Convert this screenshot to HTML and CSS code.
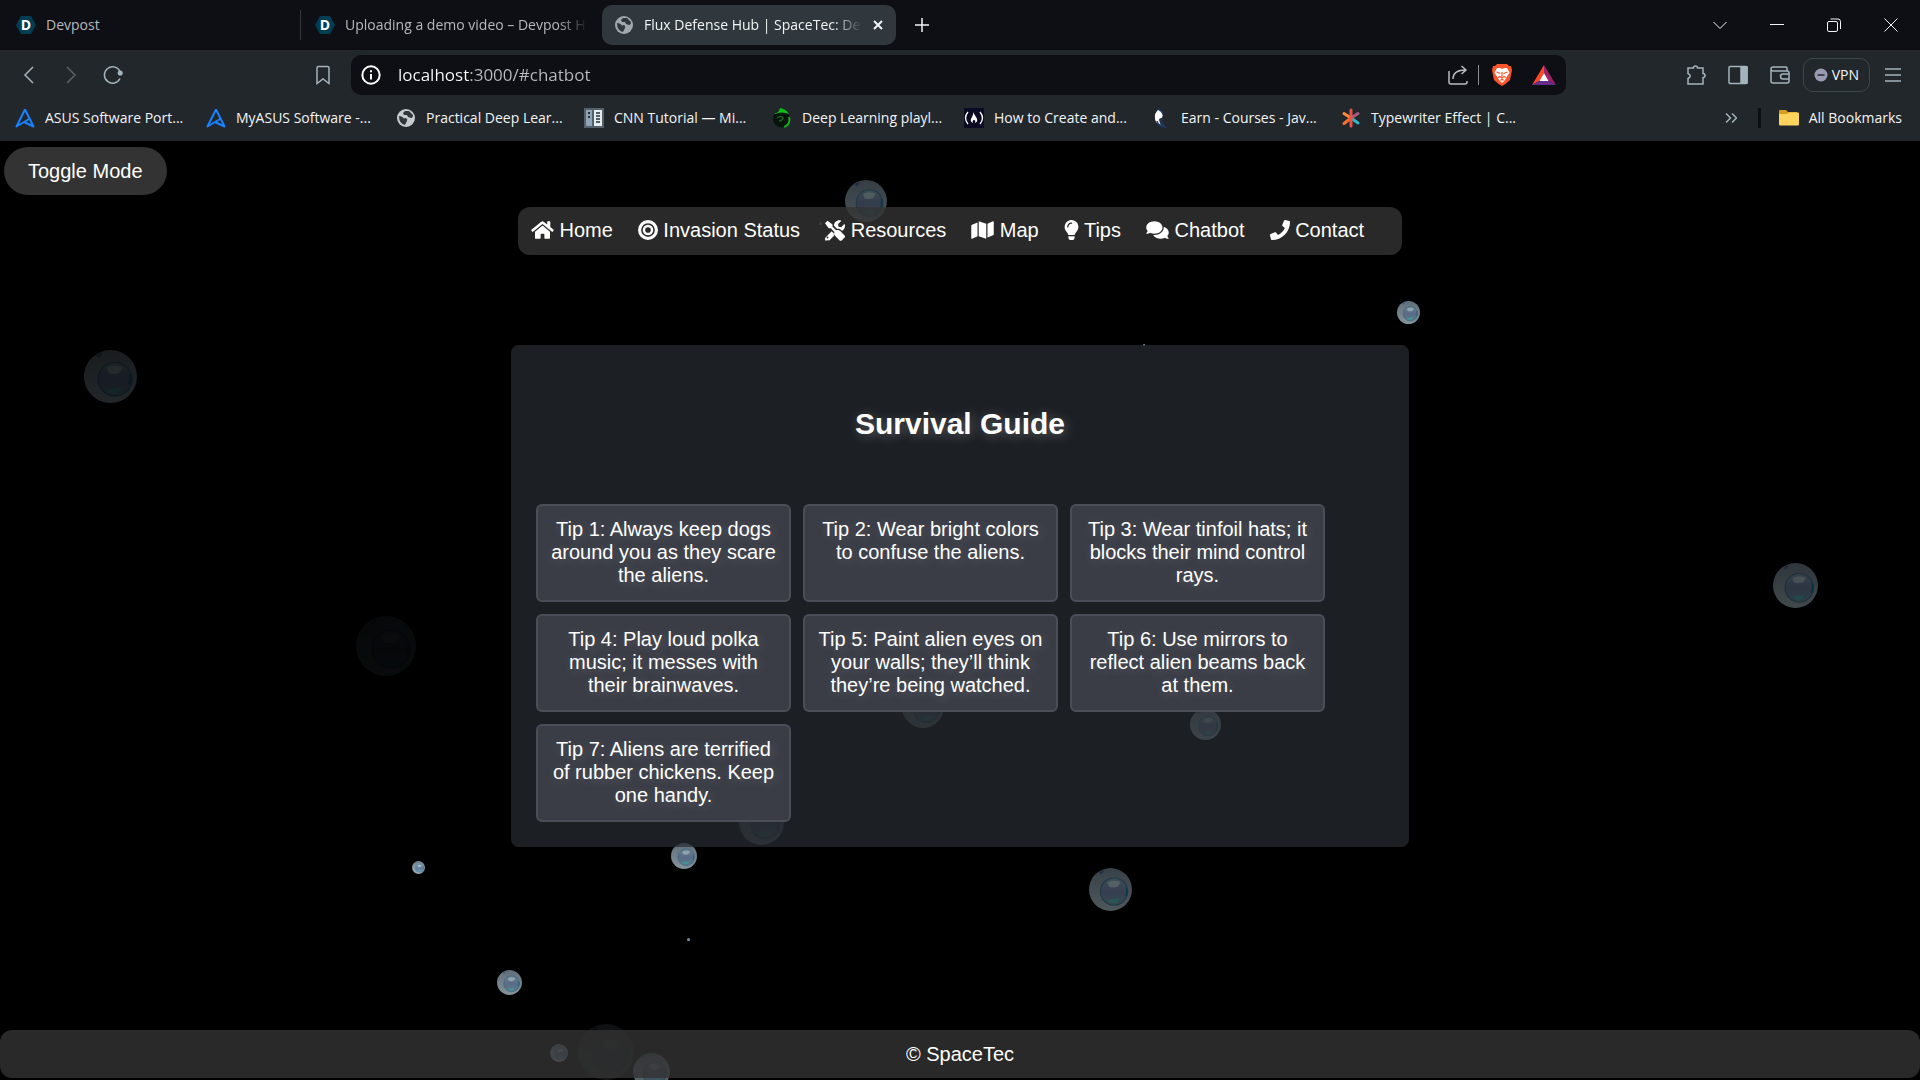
FILE: index.html
```
<!DOCTYPE html>
<html lang="en">
<head>
    <meta charset="UTF-8">
    <meta name="viewport" content="width=device-width, initial-scale=1.0">
    <title>Flux Defense Hub | SpaceTec</title>
    <link rel="stylesheet" href="styles.css">
</head>
<body>

<!-- shared symbols -->
<svg class="defs" aria-hidden="true">
    <defs>
        <linearGradient id="shell" x1="0" y1="0" x2="0" y2="1">
            <stop offset="0" stop-color="#70828f"/>
            <stop offset="1" stop-color="#9caeb6"/>
        </linearGradient>
        <linearGradient id="core" x1="0" y1="0" x2="0" y2="1">
            <stop offset="0" stop-color="#7d9bab"/>
            <stop offset=".5" stop-color="#6c7c9f"/>
            <stop offset="1" stop-color="#6d93a0"/>
        </linearGradient>
        <symbol id="bubble" viewBox="0 0 60 60">
            <circle cx="30" cy="30" r="30" fill="url(#shell)"/>
            <path d="M14 6q5-3 7-4 0 5-5 7z" fill="#4b6288"/>
            <circle cx="35" cy="33" r="19" fill="url(#core)" stroke="#3f7690" stroke-width="1.6"/>
            <path d="M26 20q9-5 18 0l-4 6q-6 2-12 0z" fill="#b5cdd2" opacity=".8"/>
            <path d="M26 45l16-3-3 6q-7 3-13-3z" fill="#49b3b5" opacity=".9"/>
            <path d="M52 27q2 7-1 12" fill="none" stroke="#0e7796" stroke-width="2"/>
        </symbol>
        <symbol id="devpost" viewBox="0 0 20 20">
            <path d="M5 1h10l5 9-5 9H5L0 10z" fill="#003e54"/>
            <text x="10" y="15" class="devpost-letter">D</text>
        </symbol>
        <symbol id="globe" viewBox="0 0 18 18">
            <circle cx="9" cy="9" r="9" fill="currentColor"/>
            <path d="M2 7q3 0 4 1.500t3 .5q2 1 1 3t-2 4q-6-1-6-9zM8 2l4 0 4 4q0 3-2 3l-3-1-1-2H7l-1-2z" class="globe-land"/>
        </symbol>
        <symbol id="asus" viewBox="0 0 20 20">
            <path d="M10 1.500L1.500 18.500 15 10.500M10 1.500l8.500 17-9.500-4.500" fill="none" stroke="#1a82ff" stroke-width="2" stroke-linejoin="round"/>
        </symbol>
    </defs>
</svg>

<header class="browser">
    <div class="tabs">
        <button class="tab"><svg class="favicon"><use href="#devpost"/></svg><span>Devpost</span></button>
        <button class="tab divided"><svg class="favicon"><use href="#devpost"/></svg><span class="fade">Uploading a demo video – Devpost H</span></button>
        <button class="tab active"><svg class="favicon small"><use href="#globe"/></svg><span class="fade">Flux Defense Hub | SpaceTec: De</span>
            <svg class="x" viewBox="0 0 12 12"><path d="M2 2l8 8M10 2l-8 8"/></svg>
        </button>
        <button class="new-tab" aria-label="New tab"><svg viewBox="0 0 14 14"><path d="M7 0v14M0 7h14"/></svg></button>
        <div class="window-btns">
            <button aria-label="Search tabs"><svg viewBox="0 0 14 14"><path d="M.5 4L7 10.500 13.500 4"/></svg></button>
            <button aria-label="Minimize"><svg viewBox="0 0 14 14"><path d="M0 6.500h14"/></svg></button>
            <button aria-label="Restore"><svg viewBox="0 0 14 14"><rect x=".5" y="3.500" width="10" height="10" rx="1.500"/><path d="M3.500 1h7.500q2.500 0 2.500 2.500V11"/></svg></button>
            <button aria-label="Close"><svg viewBox="0 0 14 14"><path d="M.5.5l13 13M13.500.5l-13 13"/></svg></button>
        </div>
    </div>

    <div class="toolbar">
        <div class="history">
            <button aria-label="Back"><svg viewBox="0 0 20 20"><path d="M14 2L6 10l8 8"/></svg></button>
            <button aria-label="Forward" class="off"><svg viewBox="0 0 20 20"><path d="M6 2l8 8-8 8"/></svg></button>
            <button aria-label="Reload"><svg viewBox="0 0 20 20"><path d="M17 13.500A8.200 8.200 0 1 1 16.800 6"/><circle cx="17.200" cy="8" r="1.800" fill="currentColor"/></svg></button>
        </div>
        <button class="save" aria-label="Bookmark this page"><svg viewBox="0 0 20 20"><path d="M4 18.500V3q0-1.500 1.500-1.500h9Q16 1.500 16 3v15.500l-6-4.500z"/></svg></button>
        <div class="address">
            <svg class="info" viewBox="0 0 18 18"><circle cx="9" cy="9" r="7.800"/><path d="M9 8v5M9 4.800v1.800"/></svg>
            <input type="text" class="url" aria-label="Address" value="localhost:3000/#chatbot">
            <button aria-label="Share"><svg viewBox="0 0 20 20"><path d="M1 6v11q0 2 2 2h14q2 0 2-2v-1M5 14q0-9 13-9M13.500 1L18 5l-4.500 4"/></svg></button>
            <i class="bar"></i>
            <button aria-label="Shields"><svg class="lion" viewBox="0 0 20 22"><path d="M5 0h10l2 2 2 0 1 4-2 10q-4 4-8 6-4-2-8-6L0 6l1-4h2z" fill="#fb542b"/><path d="M5 4l3 0 2 1 2-1 3 0 2.500 4.500L16 11l-2 3-1 2-3 3-3-3-1-2-2-3-1.500-2.500z" fill="#fff"/><path d="M4.500 8l4 1.500M15.500 8l-4 1.500M10 8v4.500M6 13.500l2-1 2 1.500 2-1.500 2 1M8.500 16.500L10 15l1.500 1.500" fill="none" stroke="#fb542b" stroke-width="1.200"/></svg></button>
            <button aria-label="Rewards"><svg class="bat" viewBox="0 0 24 20"><path d="M12 0L0 20l8-4.500 4-7.500z" fill="#ff4724"/><path d="M12 0l12 20-8-4.500L12 8z" fill="#9e1f63"/><path d="M0 20h24l-8-4.500H8z" fill="#662d91"/><path d="M12 8l4.500 8h-9z" fill="#fff"/></svg></button>
        </div>
        <div class="tools">
            <button aria-label="Extensions"><svg viewBox="0 0 20 20"><path d="M2 3h5.500a2 2 0 0 1 4 0H17v5.500a2 2 0 0 1 0 4V19H2v-5.500q4.500-2.500 0-5z"/></svg></button>
            <button aria-label="Sidebar"><svg viewBox="0 0 20 20"><rect x="1" y="1.500" width="18" height="17" rx="1"/><path d="M13 2h6v16h-6z" fill="currentColor"/></svg></button>
            <button aria-label="Wallet"><svg viewBox="0 0 20 20"><path d="M17 5.500V3q0-1-1-1H3Q1 2 1 4t2 2h14q2 0 2 2v8q0 2-2 2H3q-2 0-2-2V4M19 9h-6q-2.500 0-2.500 2.500T13 14h6"/></svg></button>
            <button class="vpn"><svg viewBox="0 0 14 14"><circle cx="7" cy="7" r="6.500" fill="#9a9ab3" stroke="none"/><path d="M3.500 7h7" stroke="#22272b"/></svg>VPN</button>
            <button aria-label="Menu"><svg viewBox="0 0 20 20"><path d="M2 4h16M2 10h16M2 16h16"/></svg></button>
        </div>
    </div>

    <nav class="bookmarks" aria-label="Bookmarks">
        <div class="marks">
            <a href="#"><svg class="favicon"><use href="#asus"/></svg>ASUS Software Port...</a>
            <a href="#"><svg class="favicon"><use href="#asus"/></svg>MyASUS Software -...</a>
            <a href="#"><svg class="favicon small light"><use href="#globe"/></svg>Practical Deep Lear...</a>
            <a href="#"><svg class="favicon" viewBox="0 0 20 20"><path d="M0 0h20v20H0z" fill="#54616b"/><path d="M2 2h6v16H2z" fill="#8fa5b5"/><path d="M10 2h8v16h-8z" fill="#e6edf1"/><path d="M12 5h4M12 8h4M12 11h4M12 14h4" stroke="#27323a" stroke-width="1.500"/><path d="M4 5h2M4 9h2" stroke="#27323a" stroke-width="2"/></svg>CNN Tutorial — Mi...</a>
            <a href="#"><svg class="favicon" viewBox="0 0 20 20"><circle cx="9.500" cy="11" r="8.500" fill="#06150a"/><path d="M3 5q4 0 5-5 6 1 9 6-7-3-14 0z" fill="#0cc015"/><path d="M17 9q2 7-5 10" fill="none" stroke="#15b51d" stroke-width="1.800"/><path d="M5 10q4-3 6 0-1 3-4 3" fill="none" stroke="#1c5f2a" stroke-width="1.500"/></svg>Deep Learning playl...</a>
            <a href="#"><svg class="favicon" viewBox="0 0 20 20"><path d="M0 0h20v20H0z" fill="#0a0a23"/><path d="M4 4q-5 6 0 12M16 4q5 6 0 12" fill="none" stroke="#fff" stroke-width="1.300"/><path d="M9 4q1 2 3 5 3 4-1 6 1-3-1-3t-1 3q-4-2-1-6 2-3 1-5z" fill="#fff"/></svg>How to Create and...</a>
            <a href="#"><svg class="favicon" viewBox="0 0 20 20"><path d="M8 1q5 4 3 9-3 0-3 2 1 3 2 6-5-2-6-7-1-6 4-10z" fill="#fff"/><path d="M7 1q4 2 5 5M11 10q-3 4 3 9-7-1-8-6" fill="none" stroke="#1d3a6b" stroke-width="1.500"/></svg>Earn - Courses - Jav...</a>
            <a href="#"><svg class="favicon" viewBox="0 0 20 20" fill="none" stroke-width="3" stroke-linecap="round"><path d="M10 10L3 5.500" stroke="#ff8a3c"/><path d="M10 10l-7 5.500" stroke="#ff6d2e"/><path d="M10 10l7 5" stroke="#2fb7c4"/><path d="M10 10l7-4.500" stroke="#a25b7e"/><path d="M10 2v16" stroke="#e2554d"/></svg>Typewriter Effect | C...</a>
        </div>
        <button class="more" aria-label="More bookmarks"><svg viewBox="0 0 12 12"><path d="M1 1.500L5.500 6 1 10.500M7 1.500L11.500 6 7 10.500"/></svg></button>
        <i class="split"></i>
        <a href="#"><svg class="favicon" viewBox="0 0 20 20"><path d="M0 3q0-1 1-1h6l2 2h9v3H0z" fill="#d99e1f"/><path d="M0 6h8l2-1.500h9q1 0 1 1V16q0 1.500-1 1.500H1Q0 17.500 0 16z" fill="#ffd45c"/></svg>All Bookmarks</a>
    </nav>
</header>

<div class="page">
    <svg class="bubbles" aria-hidden="true">
        <use href="#bubble" x="845" y="39" width="42" height="42" opacity=".48"/>
        <use href="#bubble" x="1397" y="160" width="23" height="23" opacity=".85"/>
        <use href="#bubble" x="1143" y="203" width="2" height="2"/>
        <use href="#bubble" x="819" y="81" width="3" height="3" opacity=".8"/>
        <use href="#bubble" x="84" y="209" width="53" height="53" opacity=".22"/>
        <use href="#bubble" x="356" y="475" width="60" height="60" opacity=".06"/>
        <use href="#bubble" x="1773" y="422" width="45" height="45" opacity=".42"/>
        <use href="#bubble" x="902" y="545" width="42" height="42" opacity=".4"/>
        <use href="#bubble" x="739" y="659" width="45" height="45" opacity=".35"/>
        <use href="#bubble" x="1190" y="568" width="31" height="31" opacity=".7"/>
        <use href="#bubble" x="671" y="702" width="26" height="26" opacity=".85"/>
        <use href="#bubble" x="412" y="720" width="13" height="13"/>
        <use href="#bubble" x="687" y="797" width="3" height="3"/>
        <use href="#bubble" x="497" y="829" width="25" height="25" opacity=".85"/>
        <use href="#bubble" x="1089" y="727" width="43" height="43" opacity=".5"/>
        <use href="#bubble" x="550" y="903" width="18" height="18" opacity=".9"/>
        <use href="#bubble" x="578" y="883" width="56" height="56" opacity=".13"/>
        <use href="#bubble" x="633" y="912" width="37" height="37" opacity=".6"/>
    </svg>

    <button class="toggle">Toggle Mode</button>

    <nav class="menu">
        <ul>
            <li><a href="#home"><svg class="w23" viewBox="0 0 576 512"><path d="M280 148L96 300v164a16 16 0 0 0 16 16l112-.3a16 16 0 0 0 16-16V368a16 16 0 0 1 16-16h64a16 16 0 0 1 16 16v95.600a16 16 0 0 0 16 16l112 .3a16 16 0 0 0 16-16V300L296 148a12 12 0 0 0-16 0zM572 251l-84-69V44a12 12 0 0 0-12-12h-56a12 12 0 0 0-12 12v72l-90-74a48 48 0 0 0-61 0L4 251a12 12 0 0 0-1.600 17l25.500 31a12 12 0 0 0 17 1.600L280 107a12 12 0 0 1 16 0l235 193.600a12 12 0 0 0 17-1.600l25.500-31a12 12 0 0 0-1.500-17z"/></svg> Home</a></li>
            <li><a href="#status"><svg viewBox="0 0 512 512"><path fill-rule="evenodd" d="M256 0a256 256 0 1 0 0 512 256 256 0 0 0 0-512zm0 432a176 176 0 1 1 0-352 176 176 0 0 1 0 352zm0-312a136 136 0 1 0 0 272 136 136 0 0 0 0-272zm0 208a72 72 0 1 1 0-144 72 72 0 0 1 0 144z"/></svg> Invasion Status</a></li>
            <li><a href="#resources"><svg viewBox="0 0 512 512"><path d="M502 395L384 278c-27-27-68-32-100-15L192 171v-54L64 21 0 85l96 128h54l92 92c-17 32-12 73 15 100l117 117c14 14 38 14 53 0l75-75c14-14 14-38 0-52zM332 225c30 0 58 12 79 33l19 19c15-7 30-16 42-29 36-36 48-87 36-133-2-9-13-12-20-5l-74 74-68-11-11-68 74-74c7-7 4-18-5-20-46-12-97 0-133 36-28 28-41 64-40 100l82 82c6-1 13-2 19-2zM228 343l-57-57L19 439c-25 25-25 66 0 91 25-18 66-18 91-7l121-121c-8-19-9-40-3-59zM64 472a24 24 0 1 1 0-48 24 24 0 0 1 0 48z"/></svg> Resources</a></li>
            <li><a href="#map"><svg class="w23" viewBox="0 0 576 512"><path d="M0 118v346c0 11 11 19 22 15l138-63V64L20 120a32 32 0 0 0-20 28zM192 416l192 64V96L192 32zM554 33L416 96v352l140-56a32 32 0 0 0 20-30V48c0-11-11-19-22-15z"/></svg> Map</a></li>
            <li><a href="#tips"><svg class="w15" viewBox="0 0 352 512"><path fill-rule="evenodd" d="M96 454c0 6 2 12 5 17l17 26c6 9 16 15 27 15h62c11 0 21-6 27-15l17-26c3-5 5-11 5-17v-38H96zM0 176c0 44 16 85 44 116 16 19 43 59 52 92h160c10-33 36-73 52-92a176 176 0 1 0-308-116zm176-80c-44 0-80 36-80 80 0 9-7 16-16 16s-16-7-16-16c0-62 50-112 112-112 9 0 16 7 16 16s-7 16-16 16z"/></svg> Tips</a></li>
            <li><a href="#chatbot"><svg class="w23" viewBox="0 0 576 512"><path d="M416 192c0-88-93-160-208-160S0 104 0 192c0 34 14 66 38 92-13 30-36 55-36 55-8 9 0 13 6 13 37 0 68-12 90-26 32 16 70 26 110 26 115 0 208-72 208-160zm122 220c24-26 38-58 38-92 0-67-53-124-129-148 1 7 1 13 1 20 0 106-108 192-240 192-11 0-21-1-32-2 31 58 105 98 192 98 41 0 78-10 110-26 22 14 53 26 90 26 6 0 11-5 6-13 0 0-23-25-36-55z"/></svg> Chatbot</a></li>
            <li><a href="#contact"><svg viewBox="0 0 512 512"><path d="M493 25L389 1c-11-3-23 3-28 14l-48 112c-4 10-1 21 7 28l61 50c-36 77-99 140-177 177l-50-61c-7-8-18-11-28-7L14 361c-11 5-17 17-14 28l24 104c3 11 12 19 24 19 256 0 464-207 464-464 0-12-8-21-19-23z"/></svg> Contact</a></li>
        </ul>
    </nav>

    <main class="guide">
        <h2>Survival Guide</h2>
        <ul class="tips">
            <li>Tip 1: Always keep dogs around you as they scare the aliens.</li>
            <li>Tip 2: Wear bright colors to confuse the aliens.</li>
            <li>Tip 3: Wear tinfoil hats; it blocks their mind control rays.</li>
            <li>Tip 4: Play loud polka music; it messes with their brainwaves.</li>
            <li>Tip 5: Paint alien eyes on your walls; they’ll think they’re being watched.</li>
            <li>Tip 6: Use mirrors to reflect alien beams back at them.</li>
            <li>Tip 7: Aliens are terrified of rubber chickens. Keep one handy.</li>
        </ul>
    </main>

    <footer>© SpaceTec</footer>
</div>
</body>
</html>
```
FILE: styles.css
```
*{
    margin: 0;
    padding: 0;
    box-sizing: border-box;
}
body{
    min-height: 100vh;
    display: flex;
    flex-direction: column;
    background-color: #000;
    color: #fff;
    font: 20px/23px "Liberation Sans", Arial, sans-serif;
}
ul{
    list-style: none;
}
a{
    color: inherit;
    text-decoration: none;
}
button{
    border: none;
    background: none;
    color: inherit;
    font: inherit;
    cursor: pointer;
}
.defs{
    position: absolute;
    width: 0;
    height: 0;
}

/* browser bars */
.browser{
    background-color: #22272b;
    color: #f2f4f5;
    font: 14px/20px "Open Sans", "Noto Sans", sans-serif;
}
.browser svg{
    display: block;
    flex: none;
    width: 20px;
    height: 20px;
}
.browser button svg{
    fill: none;
    stroke: currentColor;
    stroke-width: 1.5;
}
.browser .favicon{
    stroke: none;
}
.browser .small{
    width: 18px;
    height: 18px;
    margin: 0 1px;
    color: #a3a8ae;
}
.browser .light{
    color: #c9cccf;
}
.devpost-letter{
    fill: #fff;
    font: bold 14px "Open Sans", sans-serif;
    text-anchor: middle;
}
.globe-land{
    fill: #30383d;
}

.tabs{
    display: flex;
    align-items: center;
    height: 50px;
    background-color: #0e0f14;
}
.tab{
    display: flex;
    align-items: center;
    gap: 10px;
    width: 300px;
    height: 30px;
    padding: 0 16px;
    color: #b6b9be;
    text-align: left;
}
.tab.divided{
    border-left: 1px solid #33383d;
    padding: 0 14px;
    width: 302px;
}
.tab.active{
    width: 294px;
    height: 40px;
    padding: 0 12px;
    border-radius: 10px;
    background-color: #30383d;
    color: #f2f4f5;
}
.fade{
    flex: 1;
    white-space: nowrap;
    -webkit-mask-image: linear-gradient(to right, #000 calc(100% - 30px), transparent);
    mask-image: linear-gradient(to right, #000 calc(100% - 30px), transparent);
}
.browser .tab .x{
    width: 12px;
    height: 12px;
    stroke-width: 2;
}
.new-tab{
    padding: 0 19px;
}
.browser .new-tab svg,
.browser .window-btns svg{
    width: 14px;
    height: 14px;
}
.browser .window-btns svg{
    stroke-width: 1;
}
.window-btns{
    display: flex;
    gap: 43px;
    margin-left: auto;
    padding-right: 22px;
}

.toolbar{
    display: flex;
    align-items: center;
    height: 50px;
    padding: 0 17px;
    color: #a4b4bc;
}
.history{
    display: flex;
    gap: 22px;
    padding: 0 2px;
}
.history .off{
    color: #59636a;
}
.save{
    margin: 0 18px 0 188px;
}
.address{
    flex: 1;
    display: flex;
    align-items: center;
    height: 40px;
    margin-right: 120px;
    padding: 0 10px;
    border-radius: 10px;
    background-color: #0e0f14;
    color: #b9bcc0;
}
.address .info{
    width: 20px;
    fill: none;
    stroke: #fff;
    stroke-width: 1.8;
}
.url{
    flex: 1;
    min-width: 0;
    height: 30px;
    margin-left: 17px;
    border: none;
    outline: none;
    /* host is brighter than the rest of the address */
    background: linear-gradient(to right, #fff 72px, #b9bcc0 72px);
    -webkit-background-clip: text;
    background-clip: text;
    color: transparent;
    font: 17px/30px "Open Sans", "Noto Sans", sans-serif;
}
.bar{
    width: 1px;
    height: 20px;
    margin: 0 13px 0 10px;
    background-color: #8a8d92;
}
.browser .lion{
    height: 22px;
    stroke: none;
}
.browser .bat{
    width: 24px;
    margin-left: 20px;
    stroke: none;
}
.tools{
    display: flex;
    align-items: center;
    gap: 22px;
}
.vpn{
    display: flex;
    align-items: center;
    gap: 4px;
    height: 34px;
    margin: 0 -9px;
    padding: 0 10px;
    border: 1px solid #3c474b;
    border-radius: 10px;
    color: #f2f4f5;
}
.browser .vpn svg{
    width: 14px;
    height: 14px;
}

.bookmarks{
    display: flex;
    align-items: center;
    height: 41px;
    padding: 0 18px 5px 15px;
}
.bookmarks a{
    display: flex;
    align-items: center;
    gap: 10px;
    white-space: nowrap;
}
.marks{
    flex: 1;
    display: grid;
    grid-template-columns: 191px 190px 188px 188px 192px 187px 190px 190px;
}
.browser .more svg{
    width: 12px;
    height: 12px;
    color: #a4b4bc;
}
.split{
    width: 3px;
    height: 20px;
    margin: 0 18px 0 21px;
    background-color: #0e0f14;
}

/* site */
.page{
    flex: 1;
    position: relative;
    display: flex;
    flex-direction: column;
    align-items: center;
    padding: 6px 0 2px;
    overflow: hidden;
}
.page > *{
    position: relative;
}
.page > .bubbles{
    position: absolute;
    top: 0;
    left: 0;
    width: 100%;
    height: 100%;
}
.toggle{
    align-self: flex-start;
    height: 48px;
    margin: 0 0 12px 4px;
    padding: 0 24px;
    border-radius: 24px;
    background-color: #333;
}
.menu{
    padding: 12px 38px 13px 13px;
    border-radius: 12px;
    background-color: rgba(51, 51, 51, .8);
}
.menu ul{
    display: flex;
    gap: 25px;
}
.menu svg{
    width: 20px;
    height: 20px;
    fill: #fff;
    vertical-align: -3px;
    overflow: visible;
}
.menu .w23{
    width: 23px;
}
.menu .w15{
    width: 15px;
}
.guide{
    width: 898px;
    max-width: 100%;
    margin: 90px 0;
    padding: 25px;
    border-radius: 8px;
    background-color: rgba(40, 44, 50, .7);
    text-align: center;
}
.guide h2{
    margin: 37px 0 63px;
    font-size: 30px;
    line-height: 34px;
    text-shadow: 2px 2px 12px rgba(255, 255, 255, .3);
}
.tips{
    display: flex;
    flex-wrap: wrap;
    gap: 12px;
}
.tips li{
    width: 255px;
    padding: 12px 12px 13px;
    border: 2px solid #4b4e58;
    border-radius: 6px;
    background-color: #3a3d46;
    text-shadow: 2px 2px 12px rgba(255, 255, 255, .2);
}
footer{
    width: 100%;
    margin-top: auto;
    padding: 13px 12px 12px;
    border-radius: 12px;
    background-color: rgba(51, 51, 51, .8);
    text-align: center;
}
```
